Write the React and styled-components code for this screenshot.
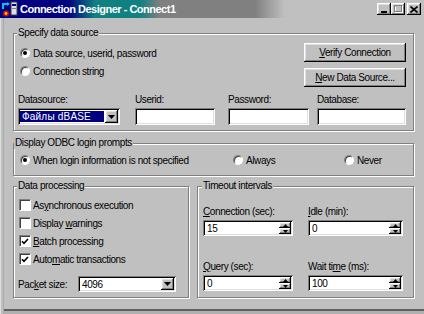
import React from 'react'
import styled, { createGlobalStyle } from 'styled-components'

const GlobalStyle = createGlobalStyle`
  html, body { margin: 0; padding: 0; background: #c0c0c0; }
  body {
    font-family: "Liberation Sans", Arial, sans-serif;
    font-size: 10px;
    letter-spacing: -0.4px;
    color: #000;
  }
`

const raised = `
  box-shadow: inset -1px -1px 0 #000, inset 1px 1px 0 #fff,
    inset -2px -2px 0 #808080, inset 2px 2px 0 #dfdfdf;
`

const Window = styled.div`
  width: 424px;
  height: 314px;
  box-sizing: border-box;
  background: #c0c0c0;
  display: flex;
  flex-direction: column;
  overflow: hidden;
  box-shadow: inset 1px 0 0 #dfdfdf, inset 3px 0 0 #c0c0c0, inset 4px 0 0 #a8a8a8,
    inset 0 -3px 0 #b0b0b0, inset 0 -5px 0 #606060;
`

const TitleBar = styled.div`
  height: 18px;
  flex: none;
  display: flex;
  align-items: center;
  padding: 0 3px 0 2px;
  background: linear-gradient(90deg, #000080 0px, #000080 68px, #108080 95px,
    #108080 140px, #808080 160px, #808080 255px, #c0c0c0 285px);
`

const TitleText = styled.span`
  flex: 1;
  margin-left: 2px;
  color: #fff;
  font-weight: bold;
  font-size: 11px;
  letter-spacing: -0.5px;
  white-space: nowrap;
`

const CapButton = styled.span`
  width: 14px;
  height: 12px;
  box-sizing: border-box;
  background: #c0c0c0;
  ${raised}
  display: flex;
  align-items: center;
  justify-content: center;
  margin-left: ${p => p.$gap || 0}px;
`

const Body = styled.div`
  flex: 1;
  padding: 9px 10px 0 13px;
  display: flex;
  flex-direction: column;
`

const Group = styled.fieldset`
  margin: ${p => p.$mt || 0}px 0 0 0;
  min-width: 0;
  box-sizing: border-box;
  width: ${p => (p.$w ? `${p.$w}px` : 'auto')};
  border: 1px solid #808080;
  box-shadow: 1px 1px 0 #fff, inset 1px 1px 0 #fff;
  padding: ${p => p.$pad};
`

const Caption = styled.legend`
  padding: 0 1px;
  margin-left: ${p => p.$shift || -1}px;
  line-height: 12px;
  background: #c0c0c0;
  white-space: nowrap;
`

const TopRow = styled.div`
  display: flex;
  justify-content: space-between;
`

const Stack = styled.div`
  display: flex;
  flex-direction: column;
  gap: ${p => p.$gap || 0}px;
  margin-top: ${p => p.$mt || 0}px;
`

const PushButton = styled.div`
  width: 102px;
  height: 19px;
  box-sizing: border-box;
  background: #c0c0c0;
  ${raised}
  display: flex;
  align-items: center;
  justify-content: center;
  white-space: nowrap;
`

const Choice = styled.label`
  display: flex;
  align-items: center;
  height: 18px;
  gap: 3px;
  margin-left: 2px;
  white-space: nowrap;
`

const Check = styled(Choice)`
  margin-left: 1px;
  gap: 2px;
`

const RadioMark = styled.span`
  width: 10px;
  height: 10px;
  box-sizing: border-box;
  flex: none;
  border-radius: 50%;
  background: #fff;
  border: 1px solid;
  border-color: #808080 #fff #fff #808080;
  box-shadow: inset 1px 1px 0 #404040;
  display: flex;
  align-items: center;
  justify-content: center;
  &::after {
    content: '';
    width: 4px;
    height: 4px;
    border-radius: 50%;
    background: ${p => (p.$on ? '#000' : 'transparent')};
  }
`

const CheckMark = styled.span`
  width: 12px;
  height: 12px;
  box-sizing: border-box;
  flex: none;
  background: #fff;
  border: 1px solid;
  border-color: #808080 #fff #fff #808080;
  box-shadow: inset 1px 1px 0 #404040;
  display: flex;
  align-items: center;
  justify-content: center;
`

const FieldsGrid = styled.div`
  display: grid;
  grid-template-columns: ${p => p.$cols};
  row-gap: ${p => p.$rowGap || 0}px;
  margin-top: ${p => p.$mt || 0}px;
`

const FieldLabel = styled.div`
  line-height: 12px;
  height: 12px;
  margin-bottom: 2px;
  white-space: nowrap;
`

const Sunken = styled.div`
  box-sizing: border-box;
  width: ${p => p.$w}px;
  height: ${p => p.$h || 17}px;
  background: #fff;
  box-shadow: inset 1px 1px 0 #808080, inset -1px -1px 0 #fff,
    inset 2px 2px 0 #000, inset -2px -2px 0 #dfdfdf;
  padding: 2px;
  display: flex;
  align-items: stretch;
`

const Value = styled.span`
  flex: 1;
  display: flex;
  align-items: center;
  padding-left: 2px;
  white-space: nowrap;
  overflow: hidden;
`

const Selected = styled.span`
  flex: 1;
  display: flex;
  align-items: center;
  margin: 1px 1px 1px 0;
  padding-left: 2px;
  background: #000080;
  color: #fff;
  letter-spacing: 0.2px;
  white-space: nowrap;
`

const ArrowButton = styled.span`
  width: ${p => p.$w || 13}px;
  flex: ${p => (p.$fill ? 1 : 'none')};
  box-sizing: border-box;
  background: #c0c0c0;
  ${raised}
  display: flex;
  align-items: center;
  justify-content: center;
`

const Spinner = styled.span`
  width: 12px;
  display: flex;
  flex-direction: column;
`

const PacketRow = styled.div`
  display: flex;
  align-items: center;
  margin-top: 8px;
`

const PacketLabel = styled.span`
  width: 60px;
  white-space: nowrap;
`

const BottomRow = styled.div`
  display: flex;
  gap: 8px;
  margin-top: 4px;
`

const Down = () => (
  <svg width="7" height="4" viewBox="0 0 7 4">
    <path d="M0 0h7L3.5 4z" fill="#000" />
  </svg>
)

const Tiny = ({ up }) => (
  <svg width="5" height="3" viewBox="0 0 5 3">
    <path d={up ? 'M0 3h5L2.5 0z' : 'M0 0h5L2.5 3z'} fill="#000" />
  </svg>
)

const Combo = ({ w, h, children, selected }) => (
  <Sunken $w={w} $h={h}>
    {selected ? <Selected>{children}</Selected> : <Value>{children}</Value>}
    <ArrowButton>
      <Down />
    </ArrowButton>
  </Sunken>
)

const Spin = ({ w, children }) => (
  <Sunken $w={w} $h={16}>
    <Value>{children}</Value>
    <Spinner>
      <ArrowButton $fill $w={12}><Tiny up /></ArrowButton>
      <ArrowButton $fill $w={12}><Tiny /></ArrowButton>
    </Spinner>
  </Sunken>
)

const Radio = ({ on, children }) => (
  <Choice>
    <RadioMark $on={on} />
    <span>{children}</span>
  </Choice>
)

const Box = ({ on, children }) => (
  <Check>
    <CheckMark>
      {on && (
        <svg width="8" height="7" viewBox="0 0 8 7">
          <path d="M1 3.2l2 2.2L7 1" stroke="#000" strokeWidth="1.6" fill="none" />
        </svg>
      )}
    </CheckMark>
    <span>{children}</span>
  </Check>
)

const AppIcon = () => (
  <svg width="16" height="16" viewBox="0 0 16 16">
    <path d="M1 8V3h5" stroke="#00c0ff" strokeWidth="2" fill="none" />
    <path d="M5 1l3 2-3 2z" fill="#00c0ff" />
    <rect x="9" y="1" width="6" height="13" fill="#dfdfdf" stroke="#404040" strokeWidth="1" />
    <rect x="10" y="3" width="4" height="2" fill="#0000a0" />
    <rect x="10" y="7" width="4" height="1" fill="#808080" />
    <circle cx="4" cy="12.5" r="3" fill="#e00000" />
    <circle cx="4" cy="12.5" r="1.4" fill="#ffd800" />
  </svg>
)

export default function App() {
  return (
    <>
      <GlobalStyle />
      <Window>
        <TitleBar>
          <AppIcon />
          <TitleText>Connection Designer - Connect1</TitleText>
          <CapButton>
            <svg width="6" height="8" viewBox="0 0 6 8"><rect x="0" y="6" width="6" height="2" fill="#000" /></svg>
          </CapButton>
          <CapButton>
            <svg width="9" height="8" viewBox="0 0 9 8">
              <rect x="1.5" y="1.5" width="7" height="6" fill="none" stroke="#fff" />
              <rect x="0.5" y="0.5" width="7" height="6" fill="none" stroke="#808080" />
              <rect x="0.5" y="0.5" width="7" height="1" fill="#808080" />
            </svg>
          </CapButton>
          <CapButton $gap={2}>
            <svg width="8" height="7" viewBox="0 0 8 7">
              <path d="M0.5 0.5l7 6M7.5 0.5l-7 6" stroke="#000" strokeWidth="1.6" />
            </svg>
          </CapButton>
        </TitleBar>

        <Body>
          <Group $pad="4px 7px 5px 4px">
            <Caption>Specify data source</Caption>
            <TopRow>
              <Stack $mt={1}>
                <Radio on>Data source, userid, password</Radio>
                <Radio>Connection string</Radio>
              </Stack>
              <Stack $gap={6}>
                <PushButton><span><u>V</u>erify Connection</span></PushButton>
                <PushButton><span><u>N</u>ew Data Source...</span></PushButton>
              </Stack>
            </TopRow>
            <FieldsGrid $cols="117px 93px 89px 89px" $mt={7}>
              <div>
                <FieldLabel>Datasource:</FieldLabel>
                <Combo w={102} selected>Файлы dBASE</Combo>
              </div>
              <div>
                <FieldLabel>Userid:</FieldLabel>
                <Sunken $w={80} />
              </div>
              <div>
                <FieldLabel>Password:</FieldLabel>
                <Sunken $w={81} />
              </div>
              <div>
                <FieldLabel>Database:</FieldLabel>
                <Sunken $w={89} />
              </div>
            </FieldsGrid>
          </Group>

          <Group $mt={6} $pad="2px 7px 6px 4px">
            <Caption $shift={-4}>Display ODBC login prompts</Caption>
            <FieldsGrid $cols="213px 111px 1fr">
              <Radio on>When login information is not specified</Radio>
              <Radio>Always</Radio>
              <Radio>Never</Radio>
            </FieldsGrid>
          </Group>

          <BottomRow>
            <Group $w={176} $pad="4px 6px 5px 4px">
              <Caption>Data processing</Caption>
              <Box>As<u>y</u>nchronous execution</Box>
              <Box>Display <u>w</u>arnings</Box>
              <Box on><u>B</u>atch processing</Box>
              <Box on>Auto<u>m</u>atic transactions</Box>
              <PacketRow>
                <PacketLabel>Pac<u>k</u>et size:</PacketLabel>
                <Combo w={98} h={16}>4096</Combo>
              </PacketRow>
            </Group>

            <Group $w={217} $pad="14px 9px 5px 5px">
              <Caption>Timeout intervals</Caption>
              <FieldsGrid $cols="105px 95px" $rowGap={25}>
                <div>
                  <FieldLabel><u>C</u>onnection (sec):</FieldLabel>
                  <Spin w={90}>15</Spin>
                </div>
                <div>
                  <FieldLabel><u>I</u>dle (min):</FieldLabel>
                  <Spin w={95}>0</Spin>
                </div>
                <div>
                  <FieldLabel><u>Q</u>uery (sec):</FieldLabel>
                  <Spin w={90}>0</Spin>
                </div>
                <div>
                  <FieldLabel>Wait ti<u>m</u>e (ms):</FieldLabel>
                  <Spin w={95}>100</Spin>
                </div>
              </FieldsGrid>
            </Group>
          </BottomRow>
        </Body>
      </Window>
    </>
  )
}
